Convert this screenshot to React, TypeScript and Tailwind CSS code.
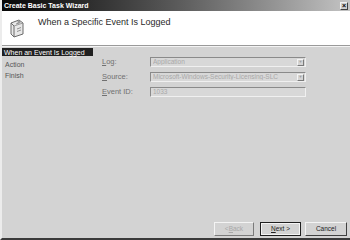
import React from "react";

const FONT = { fontFamily: '"Liberation Sans", Arial, sans-serif' };

function Field({ label, value, combo }: { label: React.ReactNode; value: string; combo?: boolean }) {
  return (
    <div className="flex items-center h-[10px]">
      <span className="w-[48px] text-[7.5px] text-[#707070]">{label}</span>
      <div className="flex h-[10px] w-[156px] items-center border border-[#8a8a8a] border-b-[#f0f0f0] border-r-[#f0f0f0] bg-[#d8d8d8] pl-[2px]">
        <span className="flex-1 truncate text-[6.5px] leading-none text-[#a8a8a8]">{value}</span>
        {combo && (
          <span className="mr-[1px] flex h-[7px] w-[7px] items-center justify-center border border-[#f4f4f4] border-b-[#7a7a7a] border-r-[#7a7a7a] bg-[#d4d4d4] text-[4px] leading-none text-[#a0a0a0]">
            ▼
          </span>
        )}
      </div>
    </div>
  );
}

export default function App() {
  return (
    <div
      style={FONT}
      className="flex h-[240px] w-[350px] flex-col overflow-hidden border-b-2 border-l-2 border-b-[#3a3a3a] border-l-[#ececec] bg-[#d3d3d3]"
    >
      {/* title bar */}
      <div className="flex h-[11px] shrink-0 items-center justify-between bg-gradient-to-r from-[#080808] via-[#5a5a5a] to-[#c4c4c4] pl-[2px] pr-[2px]">
        <span className="text-[7px] font-bold leading-none text-white">Create Basic Task Wizard</span>
        <span className="flex h-[8px] w-[8px] items-center justify-center border border-[#f0f0f0] border-b-[#404040] border-r-[#404040] bg-[#cfcfcf] text-[7px] font-bold leading-none text-black">
          ×
        </span>
      </div>

      {/* header */}
      <div className="flex h-[35px] shrink-0 items-start gap-[12px] border-b border-[#9a9a9a] bg-white pl-[6px] pt-[4px]">
        <svg width="18" height="22" viewBox="0 0 18 22" className="mt-[2px]">
          <path d="M3 6 L11 3 L15 6 L15 17 L6 20 L3 17 Z" fill="#e8e8e8" stroke="#6a6a6a" strokeWidth="1" />
          <path d="M3 6 L6 9 L6 20" fill="none" stroke="#6a6a6a" strokeWidth="1" />
          <path d="M6 9 L15 6" fill="none" stroke="#8a8a8a" strokeWidth="0.8" />
          <path d="M9 12 L13 10.5 M9 14.5 L13 13 M8 7 L11 6" stroke="#7a7a7a" strokeWidth="0.8" />
          <circle cx="11" cy="5" r="1.6" fill="#9a9a9a" />
        </svg>
        <span className="mt-[3px] text-[9px] leading-none text-[#2a2a2a]">When a Specific Event Is Logged</span>
      </div>

      {/* body */}
      <div className="flex flex-1 border-t border-[#f4f4f4]">
        <div className="flex w-[91px] flex-col pt-[1px]">
          <div className="flex h-[8px] items-center bg-[#202020] pl-[2px] text-[7px] leading-none text-white">
            When an Event Is Logged
          </div>
          <div className="mt-[5px] pl-[3px] text-[7px] leading-none text-[#555]">Action</div>
          <div className="mt-[4px] pl-[3px] text-[7px] leading-none text-[#555]">Finish</div>
        </div>
        <div className="flex flex-col gap-[5px] pl-[9px] pt-[10px]">
          <Field label={<><u>L</u>og:</>} value="Application" combo />
          <Field label={<><u>S</u>ource:</>} value="Microsoft-Windows-Security-Licensing-SLC" combo />
          <Field label={<><u>E</u>vent ID:</>} value="1033" />
        </div>
      </div>

      {/* buttons */}
      <div className="flex h-[16px] shrink-0 items-start justify-end pr-[3px]">
        <button className="flex h-[14px] w-[40px] shrink-0 items-center justify-center border border-[#f4f4f4] border-b-[#7a7a7a] border-r-[#7a7a7a] text-[6.5px] leading-none text-[#a8a8a8]">
          &lt; <u>B</u>ack
        </button>
        <button className="ml-[6px] flex h-[14px] w-[41px] shrink-0 items-center justify-center border border-[#202020] outline outline-1 -outline-offset-2 outline-[#f4f4f4] text-[6.5px] leading-none text-[#222]">
          <u>N</u>ext &gt;
        </button>
        <button className="ml-[4px] flex h-[14px] w-[42px] shrink-0 items-center justify-center border border-[#f4f4f4] border-b-[#404040] border-r-[#404040] text-[6.5px] leading-none text-[#222]">
          Cancel
        </button>
      </div>
    </div>
  );
}
